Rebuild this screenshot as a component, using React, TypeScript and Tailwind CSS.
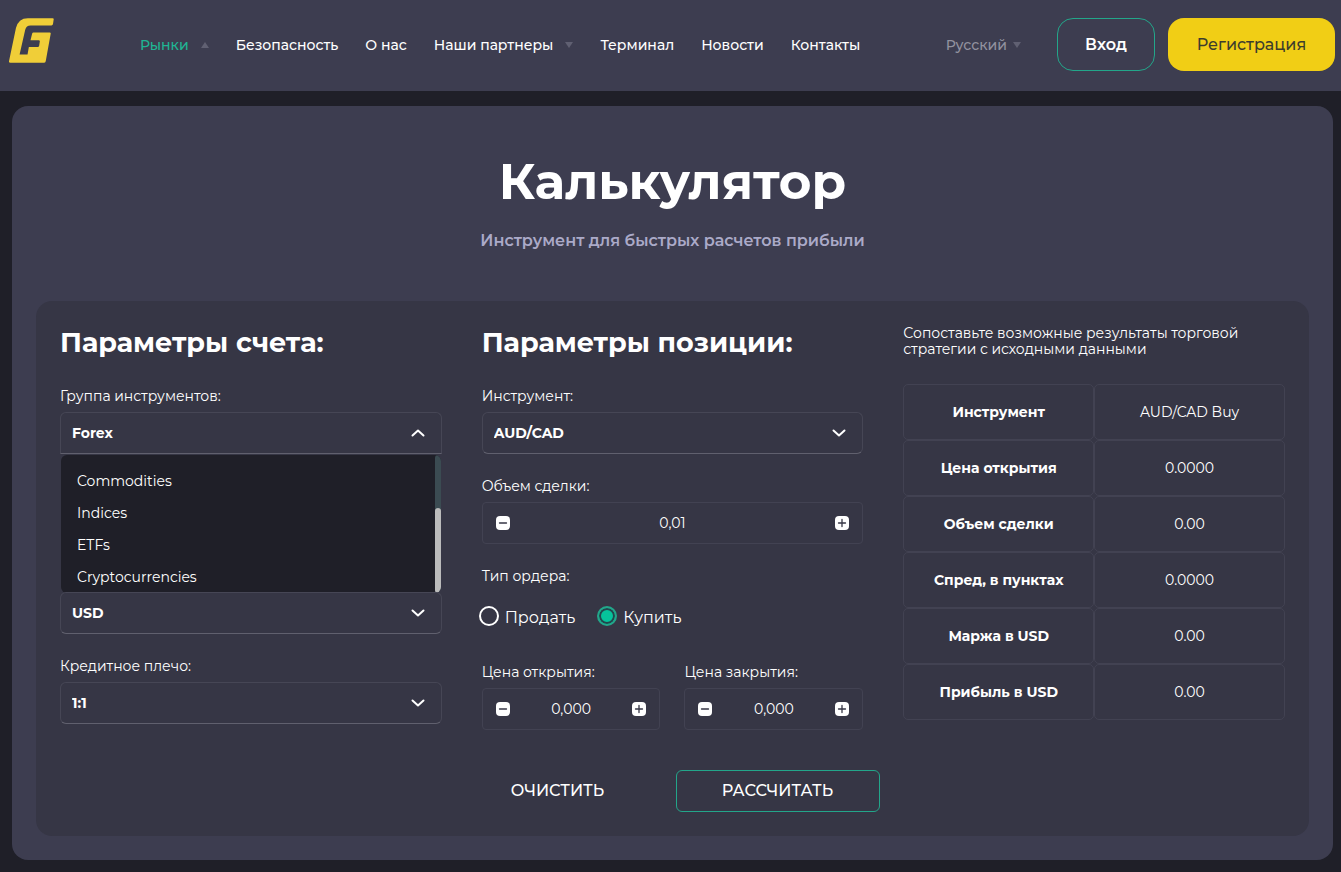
import { useState, type ReactNode } from "react";

const results = [
  ["Инструмент", "AUD/CAD Buy"],
  ["Цена открытия", "0.0000"],
  ["Объем сделки", "0.00"],
  ["Спред, в пунктах", "0.0000"],
  ["Маржа в USD", "0.00"],
  ["Прибыль в USD", "0.00"],
];

const groups = ["Commodities", "Indices", "ETFs", "Cryptocurrencies"];

function Logo() {
  return (
    <svg viewBox="27 54 136 135" className="h-[45px] w-[45px]" aria-hidden="true">
      <path
        fill="#f0ce38"
        d="M84 54H159Q163 54 162 58L160 72Q159 76 155 76H92Q79 76 76 89L59 164H83L87 141H114Q117 141 118 138L120 125Q121 121 117 121H92L97 100Q98 97 101 97H150Q154 97 153 101L138 184Q137 189 132 189H31Q26 189 27 184L48 84Q55 54 84 54Z"
      />
    </svg>
  );
}

function Triangle({ up = false }: { up?: boolean }) {
  return (
    <svg viewBox="0 0 8 6" className="h-[6px] w-2 shrink-0 fill-[#606072]" aria-hidden="true">
      <path d={up ? "M4 0L8 6H0Z" : "M0 0H8L4 6Z"} />
    </svg>
  );
}

function Chevron({ up = false }: { up?: boolean }) {
  return (
    <svg
      viewBox="0 0 14 8"
      className="pointer-events-none absolute top-1/2 right-[17px] h-2 w-[14px] -translate-y-1/2"
      fill="none"
      stroke="#fff"
      strokeWidth="2"
      strokeLinecap="round"
      strokeLinejoin="round"
      aria-hidden="true"
    >
      <path d={up ? "M1.5 6.5L7 1.5L12.5 6.5" : "M1.5 1.5L7 6.5L12.5 1.5"} />
    </svg>
  );
}

function Label({ htmlFor, children }: { htmlFor: string; children: ReactNode }) {
  return (
    <label htmlFor={htmlFor} className="mb-[6px] block text-[14px] leading-5">
      {children}
    </label>
  );
}

function Select({ id, value, open = false, label }: { id: string; value: string; open?: boolean; label?: string }) {
  return (
    <div className="relative">
      <select
        id={id}
        aria-label={label}
        className={
          "block h-[42px] w-full appearance-none border border-[#464655] border-b-[#60606e] bg-transparent pr-10 pl-[11px] text-[14px] font-bold outline-none " +
          (open ? "rounded-t-[6px]" : "rounded-[6px]")
        }
      >
        <option>{value}</option>
      </select>
      <Chevron up={open} />
    </div>
  );
}

function StepIcon({ plus = false }: { plus?: boolean }) {
  return (
    <svg viewBox="0 0 14 14" className="h-[14px] w-[14px]" aria-hidden="true">
      <rect width="14" height="14" rx="4" fill="#fff" />
      <path d={plus ? "M3.5 7H10.5M7 3.5V10.5" : "M3.5 7H10.5"} stroke="#363645" strokeWidth="1.3" strokeLinecap="round" />
    </svg>
  );
}

function Stepper({ id, initial, digits }: { id: string; initial: string; digits: number }) {
  const [value, setValue] = useState(initial);
  const step = (sign: number) => {
    const next = Math.max(0, Number(value.replace(",", ".")) + sign / 10 ** digits);
    setValue(next.toFixed(digits).replace(".", ","));
  };
  return (
    <div className="flex h-[42px] items-center rounded-[4px] border border-[#424252] px-[13px]">
      <button type="button" aria-label="Уменьшить" onClick={() => step(-1)}>
        <StepIcon />
      </button>
      <input
        id={id}
        value={value}
        onChange={(e) => setValue(e.target.value)}
        className="w-0 grow bg-transparent text-center text-[14px] outline-none"
      />
      <button type="button" aria-label="Увеличить" onClick={() => step(1)}>
        <StepIcon plus />
      </button>
    </div>
  );
}

function Radio({ value, checked, onSelect }: { value: string; checked: boolean; onSelect: (v: string) => void }) {
  return (
    <label className="flex items-start gap-[6px] text-[16px] leading-[23px]">
      <input
        type="radio"
        name="order"
        checked={checked}
        onChange={() => onSelect(value)}
        className="h-5 w-5 shrink-0 appearance-none rounded-full border-2 border-white checked:border-[#23a68a] checked:bg-[#06c39b] checked:shadow-[inset_0_0_0_2px_#23464d]"
      />
      {value}
    </label>
  );
}

export default function App() {
  const [order, setOrder] = useState("Купить");
  return (
    <div className="min-h-screen bg-[#1f1f28] pb-3 font-['Montserrat','Inter',sans-serif] text-white">
      <header className="flex items-center bg-[#3d3d50] pt-[18px] pr-[6px] pb-5 pl-[9px]">
        <a href="#" aria-label="G" className="self-start">
          <Logo />
        </a>
        <nav className="ml-[86px] flex items-center gap-[27px] text-[14px] leading-5 font-medium whitespace-nowrap">
          <a href="#" className="flex items-center gap-3 text-[#1fb694]">
            Рынки <Triangle up />
          </a>
          <a href="#">Безопасность</a>
          <a href="#">О нас</a>
          <a href="#" className="flex items-center gap-3">
            Наши партнеры <Triangle />
          </a>
          <a href="#">Терминал</a>
          <a href="#">Новости</a>
          <a href="#">Контакты</a>
        </nav>
        <button type="button" className="ml-auto flex items-center gap-[6px] text-[14px] leading-5 font-medium text-[#92929f]">
          Русский <Triangle />
        </button>
        <a href="#" className="ml-9 flex h-[53px] w-[98px] items-center justify-center rounded-2xl border border-[#23a68a] text-[16px] font-semibold">
          Вход
        </a>
        <a href="#" className="ml-[13px] flex h-[53px] w-[167px] items-center justify-center rounded-2xl bg-[#f1ce15] text-[16px] font-medium text-[#3d3d2d]">
          Регистрация
        </a>
      </header>

      <main className="mt-[15px] mr-2 ml-3 rounded-2xl bg-[#3d3d50] px-6 pt-11 pb-6">
        <h1 className="text-center text-[50px] leading-[64px] font-bold">Калькулятор</h1>
        <p className="mt-[15px] text-center text-[16px] leading-6 font-semibold text-[#abaac8]">
          Инструмент для быстрых расчетов прибыли
        </p>

        <form className="mt-12 rounded-2xl bg-[#363645] p-6" onSubmit={(e) => e.preventDefault()}>
          <div className="grid grid-cols-3 gap-10">
            <section>
              <h2 className="mb-[25px] text-[27px] leading-9 font-bold whitespace-nowrap">Параметры счета:</h2>
              <div className="relative">
                <Label htmlFor="group">Группа инструментов:</Label>
                <Select id="group" value="Forex" open />
                <div className="absolute inset-x-px top-full mt-px flex h-[138px] overflow-hidden rounded-[6px] bg-[#1f1f28]">
                  <ul role="listbox" aria-label="Группа инструментов" className="grow pt-[10px] pl-4 text-[14px] leading-8">
                    {groups.map((g) => (
                      <li key={g} role="option" aria-selected={false}>
                        {g}
                      </li>
                    ))}
                  </ul>
                  <div className="flex w-[6px] flex-col justify-end rounded-full bg-[#3b4b52]">
                    <div className="h-[85px] rounded-full bg-[#bbbbbb]" />
                  </div>
                </div>
              </div>
              <div className="mt-[138px]">
                <Select id="currency" value="USD" label="USD" />
              </div>
              <div className="mt-[22px]">
                <Label htmlFor="leverage">Кредитное плечо:</Label>
                <Select id="leverage" value="1:1" />
              </div>
            </section>

            <section>
              <h2 className="mb-[25px] text-[27px] leading-9 font-bold whitespace-nowrap">Параметры позиции:</h2>
              <Label htmlFor="instrument">Инструмент:</Label>
              <Select id="instrument" value="AUD/CAD" />
              <div className="mt-[22px]">
                <Label htmlFor="volume">Объем сделки:</Label>
                <Stepper id="volume" initial="0,01" digits={2} />
              </div>
              <fieldset className="mt-[22px]">
                <legend className="text-[14px] leading-5">Тип ордера:</legend>
                <div className="mt-5 -ml-[3px] flex gap-[22px]">
                  <Radio value="Продать" checked={order === "Продать"} onSelect={setOrder} />
                  <Radio value="Купить" checked={order === "Купить"} onSelect={setOrder} />
                </div>
              </fieldset>
              <div className="mt-[33px] grid grid-cols-2 gap-6">
                <div>
                  <Label htmlFor="open">Цена открытия:</Label>
                  <Stepper id="open" initial="0,000" digits={3} />
                </div>
                <div>
                  <Label htmlFor="close">Цена закрытия:</Label>
                  <Stepper id="close" initial="0,000" digits={3} />
                </div>
              </div>
            </section>

            <section>
              <p className="text-[14px] leading-4">
                Сопоставьте возможные результаты торговой
                <br />
                стратегии с исходными данными
              </p>
              <table className="mt-[27px] w-full table-fixed border-separate border-spacing-0 text-center text-[14px]">
                <tbody>
                  {results.map(([name, value]) => (
                    <tr key={name}>
                      <th scope="row" className="h-14 rounded-[5px] border border-[#424252] font-bold">
                        {name}
                      </th>
                      <td className="h-14 rounded-[5px] border border-[#424252]">{value}</td>
                    </tr>
                  ))}
                </tbody>
              </table>
            </section>
          </div>

          <div className="mt-10 flex justify-center gap-[26px] text-[16px] font-medium">
            <button type="reset" className="h-[42px] w-[184px]">
              ОЧИСТИТЬ
            </button>
            <button type="submit" className="h-[42px] w-[204px] rounded-[6px] border border-[#23a68a]">
              РАССЧИТАТЬ
            </button>
          </div>
        </form>
      </main>
    </div>
  );
}
